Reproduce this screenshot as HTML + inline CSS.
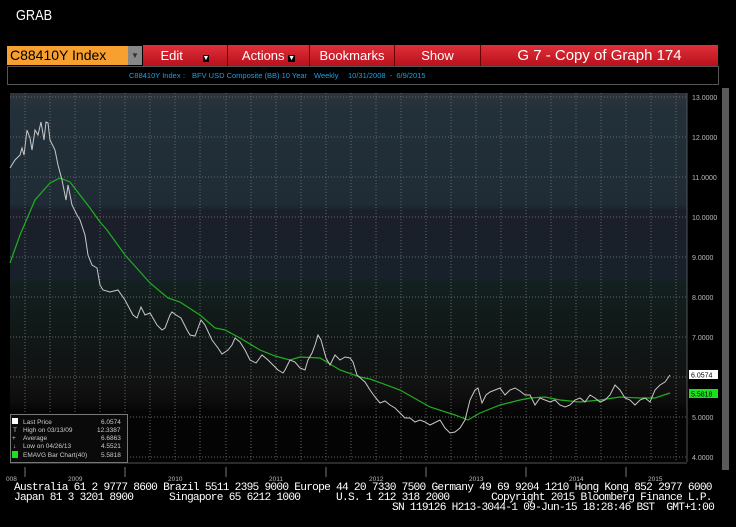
<!DOCTYPE html>
<html><head><style>
body{margin:0;background:#000;width:736px;height:527px;overflow:hidden;font-family:"Liberation Sans",sans-serif;position:relative}
.a{position:absolute}
.btn{position:absolute;top:45px;height:21px;color:#fff;font-size:13px;line-height:21px;text-align:center;background:linear-gradient(#e0303a,#b8101c);border-right:1px solid #600}
.ft{position:absolute;color:#fff;font-family:"Liberation Mono",monospace;font-size:11.2px;white-space:pre;letter-spacing:-0.75px}
.sb{position:absolute;top:0}
</style></head><body>
<div class="a" style="left:16px;top:7px;color:#fff;font-size:15px;transform:scaleX(.85);transform-origin:left">GRAB</div>
<div class="a" style="left:7px;top:46px;width:121px;height:19px;background:#f7a030;color:#000;font-size:14px;line-height:19px;padding-left:3px;box-sizing:border-box">C88410Y Index</div>
<div class="a" style="left:128px;top:46px;width:14px;height:19px;background:#888;color:#333;font-size:8px;text-align:center;line-height:19px">▼</div>
<div class="btn" style="left:143px;width:84px">Edit <span style="font-size:7px;background:#000;margin-left:16px">▼</span></div>
<div class="btn" style="left:228px;width:81px">Actions <span style="font-size:7px;background:#000">▼</span></div>
<div class="btn" style="left:310px;width:84px">Bookmarks</div>
<div class="btn" style="left:395px;width:85px">Show</div>
<div class="btn" style="left:481px;width:237px;font-size:15px;border:0">G 7 - Copy of Graph 174</div>
<div class="a" style="left:7px;top:66px;width:710px;height:17px;border:1px solid #555;color:#1aa0e8;font-size:7.5px;line-height:17px;white-space:pre"><span class="sb" style="left:121px">C88410Y Index</span><span class="sb" style="left:175px">:</span><span class="sb" style="left:184px">BFV USD Composite (BB) 10 Year</span><span class="sb" style="left:306px">Weekly</span><span class="sb" style="left:340px">10/31/2008  -  6/9/2015</span></div>
<div class="a" style="left:722px;top:88px;width:7px;height:382px;background:#5a5a5a"></div>
<svg class="a" style="left:0;top:88px" width="736" height="400" viewBox="0 88 736 400">
<defs><linearGradient id="g" x1="0" y1="93" x2="0" y2="462" gradientUnits="userSpaceOnUse">
<stop offset="0" stop-color="#2e343c"/><stop offset=".05" stop-color="#22303a"/><stop offset=".3" stop-color="#1f2c36"/><stop offset=".32" stop-color="#1a1f2a"/><stop offset=".5" stop-color="#18202a"/><stop offset=".52" stop-color="#12201f"/><stop offset=".65" stop-color="#111717"/><stop offset=".8" stop-color="#111"/><stop offset=".84" stop-color="#0c0c0c"/><stop offset=".86" stop-color="#050505"/><stop offset="1" stop-color="#030303"/></linearGradient></defs>
<rect x="10" y="93" width="677" height="369" fill="url(#g)"/>
<g stroke="#666" stroke-width="1" stroke-dasharray="1,2">
<line x1="10" x2="687" y1="97" y2="97"/><line x1="10" x2="687" y1="137" y2="137"/><line x1="10" x2="687" y1="177" y2="177"/><line x1="10" x2="687" y1="217" y2="217"/><line x1="10" x2="687" y1="257" y2="257"/><line x1="10" x2="687" y1="297" y2="297"/><line x1="10" x2="687" y1="337" y2="337"/><line x1="10" x2="687" y1="377" y2="377"/><line x1="10" x2="687" y1="417" y2="417"/><line x1="10" x2="687" y1="457" y2="457"/>
<path d="M25 93V462M50 93V462M75 93V462M100 93V462M125 93V462M150 93V462M175 93V462M200 93V462M226 93V462M251 93V462M276 93V462M301 93V462M326 93V462M351 93V462M376 93V462M401 93V462M426 93V462M451 93V462M476 93V462M501 93V462M526 93V462M551 93V462M576 93V462M601 93V462M626 93V462M651 93V462M676 93V462"/>
</g>
<line x1="687" y1="93" x2="687" y2="462" stroke="#555"/>
<line x1="10" y1="463" x2="687" y2="463" stroke="#555"/>
<path d="M25 467v10M125 467v10M226 467v10M326 467v10M426 467v10M526 467v10M626 467v10" stroke="#777"/>
<polyline fill="none" stroke="#1fb01f" stroke-width="1.2" points="10,263 20,235 35,200 50,183 60,178 70,182 80,195 90,208 100,222 107,230 125,255 150,283 168,298 180,302 200,315 215,328 225,330 240,338 260,350 275,356 290,360 300,357 320,358 340,370 360,377 370,379 400,390 430,407 455,415 468,420 480,413 500,405 520,400 530,398 545,397 560,400 580,402 600,400 620,397 640,398 655,398 670,393"/>
<polyline fill="none" stroke="#c8c8c8" stroke-width="1" points="10,168 15,160 20,155 22,148 24,155 27,130 30,138 32,150 35,130 38,135 41,122 44,140 46,122 48,123 50,140 55,150 58,165 62,180 66,200 68,185 72,205 77,215 80,220 85,235 88,255 92,265 97,268 100,285 103,290 110,292 118,290 125,300 133,315 137,318 141,307 145,315 150,313 157,325 162,330 165,328 170,315 172,312 176,315 181,318 187,330 190,335 195,336 198,328 201,320 205,325 212,340 218,348 222,354 228,350 232,345 235,338 240,342 245,350 250,360 256,363 262,355 268,360 273,365 278,370 283,373 285,370 290,360 295,362 300,368 305,370 308,360 312,353 315,345 318,335 321,340 326,358 330,365 335,355 340,360 345,357 350,358 353,362 357,375 365,382 370,390 375,397 380,403 385,401 390,405 395,408 400,413 405,418 410,418 415,422 420,420 425,422 430,425 440,420 445,428 450,433 455,432 460,428 465,420 470,400 475,390 478,388 482,403 486,395 490,392 495,390 500,388 505,395 510,390 515,388 520,391 525,395 530,395 535,405 540,398 545,400 550,402 555,400 560,405 565,407 570,405 575,400 580,398 585,402 590,395 595,398 600,402 605,400 610,395 615,385 620,390 625,398 630,400 635,405 640,400 645,398 650,402 655,390 660,385 665,382 670,375"/>
<g fill="#bbb" font-size="7" font-family="Liberation Sans">
<text x="692" y="100">13.0000</text><text x="692" y="140">12.0000</text><text x="692" y="180">11.0000</text><text x="692" y="220">10.0000</text><text x="692" y="260">9.0000</text><text x="692" y="300">8.0000</text><text x="692" y="340">7.0000</text><text x="692" y="420">5.0000</text><text x="692" y="460">4.0000</text>
</g>
<g fill="#bbb" font-size="6.5" font-family="Liberation Sans">
<text x="6" y="481">008</text><text x="68" y="481">2009</text><text x="168" y="481">2010</text><text x="269" y="481">2011</text><text x="369" y="481">2012</text><text x="469" y="481">2013</text><text x="569" y="481">2014</text><text x="648" y="481">2015</text>
</g>
<rect x="689" y="370" width="29" height="9" fill="#fff"/><text x="691" y="377.5" font-size="7" fill="#000">6.0574</text>
<rect x="689" y="389" width="29" height="9" fill="#1de01d"/><text x="691" y="396.5" font-size="7" fill="#000">5.5818</text>
<rect x="10.5" y="414.5" width="117" height="48" fill="#0a0a0a" stroke="#777"/>
<g font-size="6.5" fill="#ccc">
<rect x="12" y="418" width="6" height="6" fill="#fff"/><text x="23" y="424">Last Price</text><text x="101" y="424">6.0574</text>
<text x="13" y="432">T</text><text x="23" y="432">High on 03/13/09</text><text x="97" y="432">12.3387</text>
<text x="12" y="440">+</text><text x="23" y="440">Average</text><text x="101" y="440">6.6863</text>
<text x="13" y="448">↓</text><text x="23" y="448">Low on 04/26/13</text><text x="101" y="448">4.5521</text>
<rect x="12" y="451" width="6" height="7" fill="#1de01d"/><text x="23" y="457">EMAVG Bar Chart(40)</text><text x="101" y="457">5.5818</text>
</g>
</svg>
<div class="ft" style="left:14px;top:482px">Australia 61 2 9777 8600 Brazil 5511 2395 9000 Europe 44 20 7330 7500 Germany 49 69 9204 1210 Hong Kong 852 2977 6000</div>
<div class="ft" style="left:14px;top:492px">Japan 81 3 3201 8900      Singapore 65 6212 1000      U.S. 1 212 318 2000       Copyright 2015 Bloomberg Finance L.P.</div>
<div class="ft" style="left:392px;top:502px">SN 119126 H213-3044-1 09-Jun-15 18:28:46 BST  GMT+1:00</div>
</body></html>
